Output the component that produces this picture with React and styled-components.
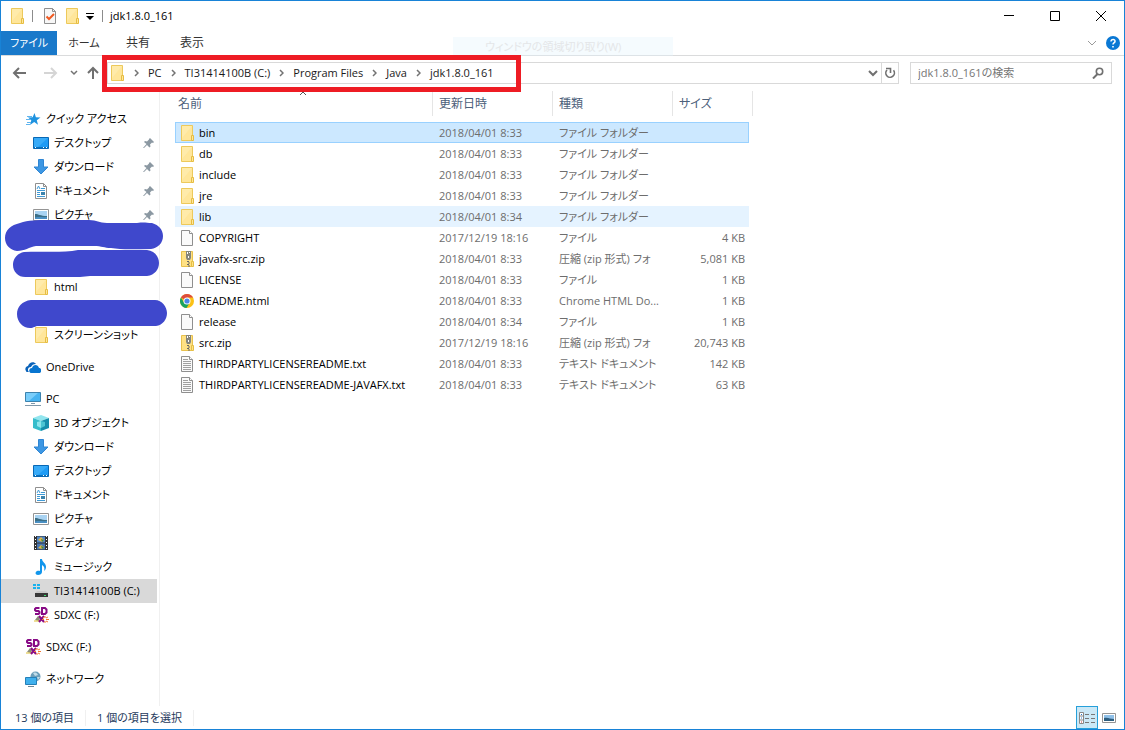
import React from 'react';
import styled, { createGlobalStyle, css } from 'styled-components';

const GlobalStyle = createGlobalStyle`
  * { box-sizing: border-box; }
  html, body { margin: 0; padding: 0; }
  body, button, input, table {
    font-family: "Open Sans", "Noto Sans CJK JP", sans-serif;
    font-size: 11px;
    line-height: 16px;
    font-feature-settings: "palt";
  }
  button { margin: 0; padding: 0; border: 0; background: none; color: inherit; }
  svg { display: block; flex: none; }
`;

const Window = styled.div`
  display: flex;
  flex-direction: column;
  min-height: 100vh;
  border: 1px solid #1883d7;
  background: #fff;
  color: #000;
  position: relative;
`;

const TitleBar = styled.header`
  display: flex;
  align-items: center;
  height: 30px;
  padding-left: 8px;
`;

const ToolButton = styled.button`
  display: flex;
  align-items: center;
  justify-content: center;
  width: ${(p) => p.$width || 16}px;
  height: 20px;
`;

const Separator = styled.span`
  width: 1px;
  height: 12px;
  margin: 0 ${(p) => p.$after || 0}px 0 ${(p) => p.$before || 0}px;
  background: #8c8c8c;
`;

const Title = styled.h1`
  margin: 0;
  font-size: 11px;
  font-weight: 400;
  flex: 1;
`;

const CaptionButton = styled.button`
  display: flex;
  align-items: center;
  justify-content: center;
  width: 46px;
  height: 30px;
`;

const Ribbon = styled.nav`
  display: flex;
  align-items: center;
  height: 25px;
  padding-right: 3px;
  border-bottom: 1px solid #dadbdc;
`;

const Tab = styled.button`
  height: 24px;
  width: 54px;
  color: #333;
  font-size: ${(p) => (p.$kanji ? 12 : 11)}px;
  ${(p) =>
    p.$file &&
    css`
      width: 56px;
      background: #1979ca;
      color: #fff;
    `}
`;

const GhostTip = styled.div`
  position: absolute;
  top: 36px;
  left: 452px;
  width: 220px;
  height: 19px;
  padding-left: 32px;
  background: rgba(225, 243, 253, 0.35);
  color: #e4e6e8;
  line-height: 19px;
  white-space: nowrap;
`;

const RibbonTools = styled.div`
  display: flex;
  gap: 8px;
  align-items: center;
  margin-left: auto;
`;

const AddressRow = styled.div`
  display: flex;
  align-items: center;
  height: 35px;
  padding: 0 12px 2px 8px;
  position: relative;
`;

const AddressBox = styled.div`
  display: flex;
  align-items: center;
  flex: 1;
  height: 22px;
  margin-right: 11px;
  padding-left: 1px;
  border: 1px solid #d9d9d9;
  color: #1a1a1a;
`;

const Crumbs = styled.ol`
  display: flex;
  align-items: center;
  flex: 1;
  margin: 0;
  padding: 0;
  list-style: none;
`;

const Crumb = styled.li`
  display: flex;
  align-items: center;
  white-space: nowrap;

  svg { margin: 0 9px; }
`;

const RefreshCell = styled.div`
  display: flex;
  align-items: center;
  height: 20px;
  border-left: 1px solid #d9d9d9;
`;

const SearchBox = styled.label`
  display: flex;
  align-items: center;
  width: 202px;
  height: 22px;
  padding: 0 7px;
  border: 1px solid #d9d9d9;
`;

const SearchInput = styled.input`
  flex: 1;
  min-width: 0;
  padding: 0;
  border: 0;
  outline: 0;
  background: none;

  &::placeholder { color: #757575; opacity: 1; }
`;

const Highlight = styled.div`
  position: absolute;
  top: -1px;
  left: 101px;
  width: 419px;
  height: 37px;
  border: 5px solid #ee1c24;
  pointer-events: none;
  z-index: 2;
`;

const Main = styled.div`
  display: flex;
  flex: 1;
`;

const Sidebar = styled.nav`
  flex: none;
  width: 159px;
  padding-top: 16px;
  border-right: 1px solid #f0f0f0;
  position: relative;
`;

const Tree = styled.ul`
  margin: 0 0 8px;
  padding: 0;
  list-style: none;
`;

const TreeRow = styled.li`
  height: 24px;
  margin-right: 2px;
  background: ${(p) => (p.$selected ? '#d9d9d9' : 'transparent')};
`;

const TreeLink = styled.a`
  display: flex;
  align-items: center;
  gap: 5px;
  height: 24px;
  padding: 0 2px 0 ${(p) => (p.$nested ? 32 : 24)}px;
  color: #000;
  text-decoration: none;
  white-space: nowrap;

  span { flex: 1; }
`;

const Scribble = styled.svg`
  position: absolute;
  top: 124px;
  left: -1px;
  z-index: 1;
`;

const Listing = styled.main`
  flex: 1;
  padding-left: 15px;
`;

const FileTable = styled.table`
  width: 574px;
  table-layout: fixed;
  border-collapse: collapse;
`;

const HeadCell = styled.th`
  position: relative;
  width: ${(p) => p.$width}px;
  height: 31px;
  padding: 5px 6px 0 ${(p) => (p.$first ? 3 : 6)}px;
  color: #4c607a;
  font-size: 12px;
  font-weight: 400;
  text-align: left;
  vertical-align: top;

  &::after {
    content: "";
    position: absolute;
    top: 0;
    right: ${(p) => (p.$last ? -4 : 0)}px;
    width: 1px;
    height: 25px;
    background: #e5e5e5;
  }
`;

const SortMark = styled.svg`
  position: absolute;
  top: 0;
  left: 124px;
`;

const FileRow = styled.tr`
  height: 21px;
  ${(p) => p.$state === 'selected' && css`
    background: #cce8ff;
    outline: 1px solid #99d1ff;
    outline-offset: -1px;
  `}
  ${(p) => p.$state === 'hover' && css`background: #e5f3ff;`}
`;

const Cell = styled.td`
  padding: 0 4px 0 6px;
  color: #6d6d6d;
  text-align: ${(p) => (p.$right ? 'right' : 'left')};
  white-space: nowrap;
`;

const NameCell = styled(Cell)`
  padding-left: 4px;
  color: #000;
`;

const FileName = styled.span`
  display: flex;
  align-items: center;
  gap: 4px;
`;

const StatusBar = styled.footer`
  display: flex;
  align-items: center;
  height: 23px;
  padding: 0 4px 0 14px;
  color: #1e395b;
`;

const StatusText = styled.span`
  padding-right: 11px;
  margin-right: 11px;
  border-right: 1px solid #f0f0f0;
`;

const ViewButtons = styled.div`
  display: flex;
  align-self: flex-start;
  margin-left: auto;
`;

const ViewButton = styled.button`
  display: flex;
  align-items: center;
  justify-content: center;
  width: 22px;
  height: 23px;
  border: 1px solid ${(p) => (p.$active ? '#26a0da' : 'transparent')};
  background: ${(p) => (p.$active ? '#cbe8f6' : 'transparent')};
`;

const Icon = ({ children, w = 16, h = 16 }) => (
  <svg width={w} height={h} viewBox={`0 0 ${w} ${h}`} aria-hidden="true">{children}</svg>
);

const FolderIcon = () => (
  <Icon>
    <path d="M2.500.5h11v15h-11z" fill="#ffe69a" stroke="#edc95b" />
    <path d="M3 1h10L3 13z" fill="#ffedb0" opacity=".7" />
    <path d="M12.500 15.500v-5h2v5z" fill="#ffe69a" stroke="#e6bd42" />
  </Icon>
);
const FileIcon = ({ lines }) => (
  <Icon>
    <path d="M2.500.5h8l3 3v12h-11z" fill="#fafafa" stroke="#8f8f8f" />
    <path d="M10.500.5v3h3" fill="#fff" stroke="#8f8f8f" />
    {lines && <path d="M4 3.500h5M4 5.500h8M4 7.500h8M4 9.500h8M4 11.500h8M4 13.500h8" stroke="#a0a0a0" />}
  </Icon>
);
const ZipIcon = () => (
  <Icon>
    <path d="M2.500.5h11v15h-11z" fill="#ffe184" stroke="#e8c14e" />
    <path d="M12.500 10.500h2v5h-2z" fill="#ffe184" stroke="#e5bf45" />
    <path d="M7 0h5v7l-1 2H8L7 7z" fill="#85857c" />
    <path d="M8 1h1v2H8zM10 1h1v1h-1zM9 5h1v2H9z" fill="#fff" />
    <path d="M8 10.500h2M9 12h2M8 13.500h2M9 15h2" stroke="#666" />
  </Icon>
);
const ChromeIcon = () => (
  <Icon>
    <circle cx="8" cy="8" r="7" fill="#fbc116" />
    <path d="M8 8 1.900 4.500A7 7 0 0 1 14.100 4.500H8z" fill="#dd4b3e" />
    <path d="M1.900 4.500A7 7 0 0 0 7.500 15l3.200-5.200L8 8 5 9.500z" fill="#1aa260" />
    <circle cx="8" cy="8" r="3.500" fill="#fff" />
    <circle cx="8" cy="8" r="2.600" fill="#4a86e8" />
  </Icon>
);
const StarIcon = () => (
  <Icon>
    <path d="m9.500 2 1.400 4.300 4.600.2-3.700 2.800 1.200 4.500L9.200 11 5 14l1.300-4.700L3 6.500l4.600-.3z" fill="#1f93e0" />
    <path d="M2 5.500h5M1 8.500h5M2 11.500h4M1 13.500h4" stroke="#5fb4ee" />
  </Icon>
);
const DesktopIcon = () => (
  <Icon>
    <path d="M.5 2.500h15v11H.5z" fill="#1e9bf5" stroke="#0868b5" />
    <path d="M1 3h14L5 12H1z" fill="#38abf8" />
    <path d="M1 12.500h14" stroke="#0871bd" />
    <path d="M2 12.500h1M10 12.500h1M13 12.500h1" stroke="#fff" />
  </Icon>
);
const DownloadIcon = () => (
  <Icon><path d="M5.500.5h5V8h4.500l-7 7-7-7h4.500z" fill="#3d97e3" stroke="#2f86d4" /></Icon>
);
const DocumentIcon = () => (
  <Icon>
    <path d="M2.500.5h8l3 3v12h-11z" fill="#fff" stroke="#8f8f8f" />
    <path d="M10.500.5v3h3" fill="none" stroke="#8f8f8f" />
    <path d="m4 6 1.500-3L7 6M8 5.500h4M4 7.500h8M4 9.500h3M4 11.500h3M4 13.500h8" fill="none" stroke="#3f9ad6" />
    <path d="M8 9h4v3H8z" fill="#3b83ad" />
  </Icon>
);
const PictureIcon = () => (
  <Icon>
    <path d="M.5 2.500h15v11H.5z" fill="#fff" stroke="#949494" />
    <path d="M2 4h12v8H2z" fill="#a9d3f2" />
    <path d="M2 7c4 0 5 2 12 2v3H2z" fill="#3c6f86" />
    <path d="M2 10.500c4-1 8 0 12-.5v2H2z" fill="#4a90c4" />
  </Icon>
);
const VideoIcon = () => (
  <Icon>
    <path d="M1 1h14v14H1z" fill="#333" />
    <path d="M4 1.500h8v6H4z" fill="#5087c7" /><path d="M4 8.500h8v6H4z" fill="#4776b2" />
    <path d="m5 5 3-3 3 3-2 2zM5 13l3-3 3 2-2 2z" fill="#e3b443" />
    <path d="m8 4 3 1-2 2zM8 11l3 1-2 2z" fill="#3f8748" />
    <path d="M2.500 1v14M13.500 1v14" stroke="#fff" strokeDasharray="1 2" />
  </Icon>
);
const MusicIcon = () => (
  <Icon>
    <path d="M7 0h2c0 3 4 4 4 8 0 2-1 3-2 4 1-3 0-5-2-6v7c0 2-2 3-4 3-3 0-3-3-1-4 1-.5 2-.500 3 0z" fill="#1196ec" />
  </Icon>
);
const DriveIcon = () => (
  <Icon>
    <path d="M0 1h3v2H0zM4 1h3v2H4zM0 4h3v2H0zM4 4h3v2H4z" fill="#19b2ee" />
    <path d="M4 8h9l2 2H2z" fill="#c9c9c9" />
    <path d="M2 10h13v4H2z" fill="#383838" />
    <path d="M11 12.500h2" stroke="#3be070" />
  </Icon>
);
const SdIcon = () => (
  <Icon>
    <path d="M6.500 1H3L2 2v1l1 1h2.500l1 1v1l-1 1H2M9 1v6h3l1.500-1.500v-3L12 1z" fill="none" stroke="#880b86" strokeWidth="2" />
    <path d="m2 13 3-4 2 2-1 3z" fill="#8b8c77" /><path d="M1 14h5" stroke="#dcbd31" />
    <path d="m6 9 5 6M11 9l-5 6" stroke="#880b86" strokeWidth="2" />
    <path d="M12 9v2M12 14v2M9 12.500h2M13 12.500h3M10 10l1 1M13 14l2 1M15 10l-2 1" stroke="#f57932" />
  </Icon>
);
const CloudIcon = () => (
  <Icon>
    <path d="M1 12C-1 9 2 7 3 7c1-4 6-5 8-2-3 0-4 1-5 3-3 0-4 3-2 5H3c-1 0-2 0-2-1z" fill="#0a62b9" />
    <path d="M6 14c-3-1-2-5 1-5 1-4 6-4 7 0 3 0 3 5 0 5z" fill="#0875d0" />
  </Icon>
);
const PcIcon = () => (
  <Icon>
    <path d="M.5 1.500h15v9H.5z" fill="#46b3f1" stroke="#3c82ad" />
    <path d="M1 2h12L4 10H1z" fill="#79cdfa" />
    <path d="M6 12.500h4M0 14.500h16" stroke="#7f98aa" />
  </Icon>
);
const CubeIcon = () => (
  <Icon>
    <path d="m8 0 8 3-8 3-8-3z" fill="#92e5ee" />
    <path d="m0 3 8 3v10l-8-3z" fill="#35bdcb" /><path d="m16 3-8 3v10l8-3z" fill="#168eac" />
    <path d="m4 7 4-1v7l-4-2z" fill="#8ce6ec" /><path d="m12 7-4-1v7l4-2z" fill="#4cc5d3" />
  </Icon>
);
const NetworkIcon = () => (
  <Icon>
    <circle cx="10.500" cy="5.500" r="5" fill="#6b9eb9" />
    <path d="M8 2c3-1 4 0 5 2l-3 1zM12 6h3l-2 3z" fill="#c2dce8" />
    <path d="M.5 6.500h11v7H.5z" fill="#3fb0ed" stroke="#2580b8" />
    <path d="M3 15.500h6" stroke="#6d8796" />
  </Icon>
);
const PinIcon = () => (
  <Icon w={12} h={12}>
    <path d="m7 1 4 4-1 1-1-.500-2 2 .500 2-1 1-2.500-2.500L1 11H0l3.500-4L1 5l1-1 2 .500 2-2L6 2z" fill="#8b98a2" />
  </Icon>
);
const Chevron = ({ down }) => (
  <Icon w={down ? 8 : 5} h={down ? 6 : 8}>
    <path d={down ? 'm1 1 3 3 3-3' : 'm1 1 3 3-3 3'} fill="none" stroke="#737373" strokeWidth="1.500" />
  </Icon>
);
const ArrowIcon = ({ dir = 'left', color = '#707070' }) => {
  const d = {
    left: 'M2 8h12M7 3 2 8l5 5',
    right: 'M2 8h12M9 3l5 5-5 5',
    up: 'M8 14V3M3 8l5-5 5 5',
  }[dir];
  return <Icon><path d={d} fill="none" stroke={color} strokeWidth="2" /></Icon>;
};

const groups = [
  [
    { label: 'クイック アクセス', icon: StarIcon, top: true },
    { label: 'デスクトップ', icon: DesktopIcon, pinned: true },
    { label: 'ダウンロード', icon: DownloadIcon, pinned: true },
    { label: 'ドキュメント', icon: DocumentIcon, pinned: true },
    { label: 'ピクチャ', icon: PictureIcon, pinned: true },
    { hidden: true },
    { hidden: true },
    { label: 'html', icon: FolderIcon },
    { hidden: true },
    { label: 'スクリーンショット', icon: FolderIcon },
  ],
  [{ label: 'OneDrive', icon: CloudIcon, top: true }],
  [
    { label: 'PC', icon: PcIcon, top: true },
    { label: '3D オブジェクト', icon: CubeIcon },
    { label: 'ダウンロード', icon: DownloadIcon },
    { label: 'デスクトップ', icon: DesktopIcon },
    { label: 'ドキュメント', icon: DocumentIcon },
    { label: 'ピクチャ', icon: PictureIcon },
    { label: 'ビデオ', icon: VideoIcon },
    { label: 'ミュージック', icon: MusicIcon },
    { label: 'TI31414100B (C:)', icon: DriveIcon, selected: true },
    { label: 'SDXC (F:)', icon: SdIcon },
  ],
  [{ label: 'SDXC (F:)', icon: SdIcon, top: true }],
  [{ label: 'ネットワーク', icon: NetworkIcon, top: true }],
];

const FOLDER = 'ファイル フォルダー';
const ZIP = '圧縮 (zip 形式) フォ';
const TEXT = 'テキスト ドキュメント';
const files = [
  { name: 'bin', date: '2018/04/01 8:33', type: FOLDER, size: '', icon: FolderIcon, state: 'selected' },
  { name: 'db', date: '2018/04/01 8:33', type: FOLDER, size: '', icon: FolderIcon },
  { name: 'include', date: '2018/04/01 8:33', type: FOLDER, size: '', icon: FolderIcon },
  { name: 'jre', date: '2018/04/01 8:33', type: FOLDER, size: '', icon: FolderIcon },
  { name: 'lib', date: '2018/04/01 8:34', type: FOLDER, size: '', icon: FolderIcon, state: 'hover' },
  { name: 'COPYRIGHT', date: '2017/12/19 18:16', type: 'ファイル', size: '4 KB', icon: FileIcon },
  { name: 'javafx-src.zip', date: '2018/04/01 8:33', type: ZIP, size: '5,081 KB', icon: ZipIcon },
  { name: 'LICENSE', date: '2018/04/01 8:33', type: 'ファイル', size: '1 KB', icon: FileIcon },
  { name: 'README.html', date: '2018/04/01 8:33', type: 'Chrome HTML Do...', size: '1 KB', icon: ChromeIcon },
  { name: 'release', date: '2018/04/01 8:34', type: 'ファイル', size: '1 KB', icon: FileIcon },
  { name: 'src.zip', date: '2017/12/19 18:16', type: ZIP, size: '20,743 KB', icon: ZipIcon },
  { name: 'THIRDPARTYLICENSEREADME.txt', date: '2018/04/01 8:33', type: TEXT, size: '142 KB', icon: FileIcon, lines: true },
  { name: 'THIRDPARTYLICENSEREADME-JAVAFX.txt', date: '2018/04/01 8:33', type: TEXT, size: '63 KB', icon: FileIcon, lines: true },
];
const path = ['PC', 'TI31414100B (C:)', 'Program Files', 'Java', 'jdk1.8.0_161'];

function TreeItem({ item }) {
  if (item.hidden) return <TreeRow />;
  const Glyph = item.icon;
  return (
    <TreeRow $selected={item.selected}>
      <TreeLink href="#" $nested={!item.top}>
        <Glyph />
        <span>{item.label}</span>
        {item.pinned && <PinIcon />}
      </TreeLink>
    </TreeRow>
  );
}

export default function App() {
  return (
    <Window lang="ja">
      <GlobalStyle />
      <TitleBar>
        <FolderIcon />
        <Separator $before={7} $after={9} />
        <ToolButton aria-label="プロパティ">
          <Icon>
            <path d="M2.500.5h8l3 3v12h-11z" fill="#f7f7f7" stroke="#8f8f8f" />
            <path d="M10.500.5v3h3" fill="none" stroke="#8f8f8f" />
            <path d="m4.500 8.500 2.500 2.500 5-5" fill="none" stroke="#f05a22" strokeWidth="2" />
          </Icon>
        </ToolButton>
        <ToolButton $width={28} aria-label="新しいフォルダー"><FolderIcon /></ToolButton>
        <ToolButton $width={8} aria-label="カスタマイズ">
          <Icon w={8} h={8}><path d="M0 1.500h8" stroke="#000" /><path d="M0 4h8L4 8z" fill="#000" /></Icon>
        </ToolButton>
        <Separator $before={8} $after={7} />
        <Title>jdk1.8.0_161</Title>
        <CaptionButton aria-label="最小化"><Icon w={10} h={10}><path d="M0 4.500h10" stroke="#000" /></Icon></CaptionButton>
        <CaptionButton aria-label="最大化"><Icon w={10} h={10}><path d="M.5.5h9v9h-9z" fill="none" stroke="#000" /></Icon></CaptionButton>
        <CaptionButton aria-label="閉じる"><Icon w={10} h={10}><path d="m0 0 10 10M10 0 0 10" stroke="#000" /></Icon></CaptionButton>
      </TitleBar>

      <Ribbon>
        <Tab $file>ファイル</Tab>
        <Tab>ホーム</Tab>
        <Tab $kanji>共有</Tab>
        <Tab $kanji>表示</Tab>
        <RibbonTools>
          <ToolButton $width={10} aria-label="リボンの展開">
            <Icon w={10} h={6}><path d="m1 1 4 4 4-4" fill="none" stroke="#9a9a9a" /></Icon>
          </ToolButton>
          <ToolButton aria-label="ヘルプ">
            <Icon>
              <circle cx="8" cy="8" r="7" fill="#0a78d4" />
              <path d="M6 6.500c0-3 4.500-2.500 4 0C9.700 8 8 8 8 9.500" fill="none" stroke="#fff" strokeWidth="1.500" />
              <path d="M7.200 11h1.600v1.500H7.200z" fill="#fff" />
            </Icon>
          </ToolButton>
        </RibbonTools>
      </Ribbon>
      <GhostTip>ウィンドウの領域切り取り(W)</GhostTip>

      <AddressRow>
        <ToolButton $width={22} aria-label="戻る"><ArrowIcon /></ToolButton>
        <ToolButton $width={38} aria-label="進む"><ArrowIcon dir="right" color="#d5d5d5" /></ToolButton>
        <ToolButton $width={10} aria-label="履歴"><Chevron down /></ToolButton>
        <ToolButton $width={28} aria-label="上へ"><ArrowIcon dir="up" /></ToolButton>
        <AddressBox>
          <FolderIcon />
          <Crumbs>
            {path.map((part) => (
              <Crumb key={part}><Chevron /><button>{part}</button></Crumb>
            ))}
          </Crumbs>
          <ToolButton aria-label="以前の場所">
            <Icon w={10} h={8}><path d="m1 2 4 4 4-4" fill="none" stroke="#707070" strokeWidth="2" /></Icon>
          </ToolButton>
          <RefreshCell>
            <ToolButton aria-label="更新">
              <Icon>
                <path d="M5 5a4.300 4.300 0 1 0 6.500.3" fill="none" stroke="#707070" strokeWidth="1.600" />
                <path d="M4 3.500h4.500V8" fill="none" stroke="#707070" strokeWidth="1.600" />
              </Icon>
            </ToolButton>
          </RefreshCell>
        </AddressBox>
        <SearchBox>
          <SearchInput type="text" aria-label="検索" placeholder="jdk1.8.0_161の検索" />
          <Icon w={12} h={12}>
            <circle cx="7.500" cy="4.500" r="3.200" fill="none" stroke="#707070" strokeWidth="1.600" />
            <path d="M5.500 7 1 11.500" stroke="#707070" strokeWidth="2" />
          </Icon>
        </SearchBox>
        <Highlight />
      </AddressRow>

      <Main>
        <Sidebar aria-label="ナビゲーション">
          {groups.map((group, g) => (
            <Tree key={g}>
              {group.map((item, i) => <TreeItem key={i} item={item} />)}
            </Tree>
          ))}
          <Scribble width="175" height="120" viewBox="0 215 175 120" fill="#3f48cc" aria-hidden="true">
            <path d="M5 238c0-8 6-13 15-15 8-3 18-3 27-3h42c8 0 10 3 18 3h30c8-1 9 0 15 0 7 2 11 7 11 13 0 7-5 12-12 13-14 0-29 1-40-1-7 0-9-2-17-2H36c-7 1-11 5-19 5-7-1-12-6-12-13z" />
            <path d="M13 265c0-7 5-12 11-13 18-1 39 1 54-2h69c8 1 12 7 12 13s-4 12-12 13H90l-10 1H27c-8 1-14-5-14-12z" />
            <path d="M17 314c0-7 5-13 14-14h124c7 0 12 7 12 13s-4 12-11 13H38c-3 0-4 2-8 2-7 0-13-6-13-14z" />
          </Scribble>
        </Sidebar>

        <Listing>
          <FileTable>
            <thead>
              <tr>
                <HeadCell $width={258} $first>
                  名前
                  <SortMark width="8" height="6" viewBox="0 0 8 6"><path d="m1 4 3-3 3 3" fill="none" stroke="#555" /></SortMark>
                </HeadCell>
                <HeadCell $width={120}>更新日時</HeadCell>
                <HeadCell $width={120}>種類</HeadCell>
                <HeadCell $width={76} $last>サイズ</HeadCell>
              </tr>
            </thead>
            <tbody>
              {files.map(({ icon: Glyph, ...f }) => (
                <FileRow key={f.name} $state={f.state}>
                  <NameCell><FileName><Glyph lines={f.lines} />{f.name}</FileName></NameCell>
                  <Cell>{f.date}</Cell>
                  <Cell>{f.type}</Cell>
                  <Cell $right>{f.size}</Cell>
                </FileRow>
              ))}
            </tbody>
          </FileTable>
        </Listing>
      </Main>

      <StatusBar>
        <StatusText>13 個の項目</StatusText>
        <StatusText>1 個の項目を選択</StatusText>
        <ViewButtons>
          <ViewButton $active aria-label="詳細">
            <Icon>
              <path d="M.5 2.500h4v11h-4zM.5 6h4M.5 10h4" fill="#fff" stroke="#888" />
              <path d="M2 4.500h1M2 8h1" stroke="#27c" /><path d="M2 12h1" stroke="#c33" />
              <path d="M6 4.500h4M12 4.500h4M6 8.500h4M12 8.500h4M6 12.500h4M12 12.500h4" stroke="#777" />
            </Icon>
          </ViewButton>
          <ViewButton aria-label="大アイコン"><Icon>
            <path d="M1.500 3.500h13v9h-13z" fill="#fff" stroke="#949494" />
            <path d="M3 5h10v6H3z" fill="#8fc0e8" /><path d="M3 8c4-1 6 1 10 1v2H3z" fill="#2d5d7e" />
          </Icon></ViewButton>
        </ViewButtons>
      </StatusBar>
    </Window>
  );
}
